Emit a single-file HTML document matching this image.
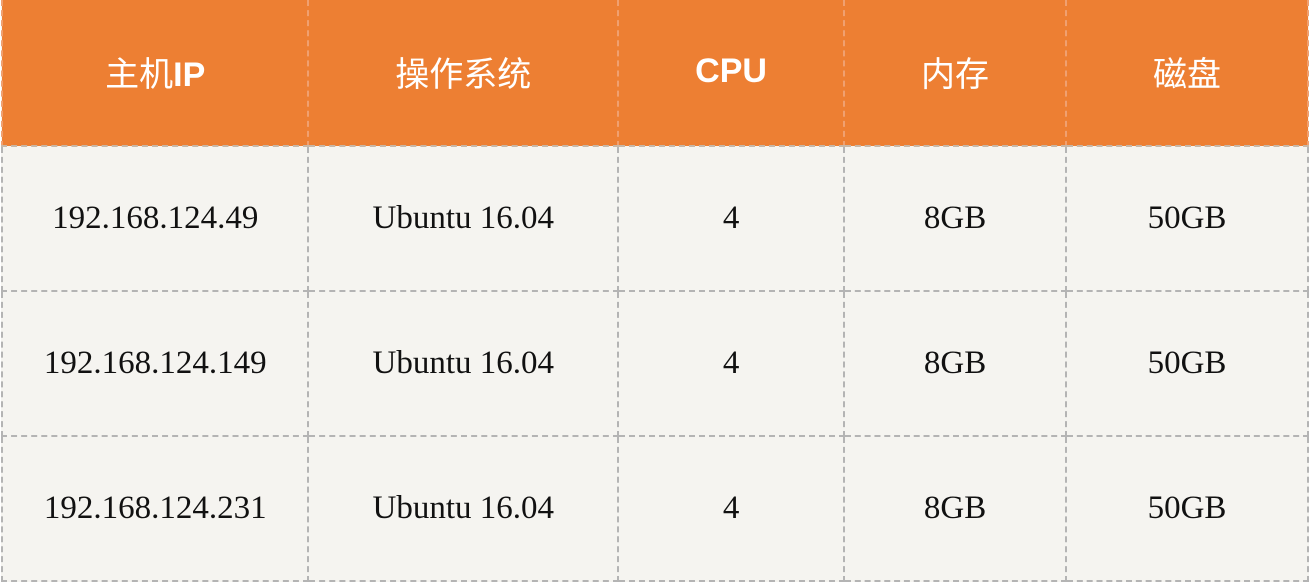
<html><head><style>
body{margin:0;width:1309px;height:585px;background:#fff;overflow:hidden}
table{position:absolute;left:1px;top:0;border-collapse:collapse;background:#f5f4f0}
td,th{border:2px dashed #b4b4b4;text-align:center;padding:0}
th{background:#ed7f33;color:#fff;height:146px;font:34px "Liberation Sans","Noto Sans CJK SC",sans-serif;border-color:#f0a070;border-bottom-color:#c8b8a8;vertical-align:middle;padding-bottom:3px}
th b{font-weight:bold}
td{height:145px;font:33px "Liberation Serif",serif;color:#111}
tr:first-child th{border-top:none}
</style></head><body>
<table>
<tr><th style="width:305px">主机<b>IP</b></th><th style="width:309px">操作系统</th><th style="width:225px"><b>CPU</b></th><th style="width:221px">内存</th><th style="width:241px">磁盘</th></tr>
<tr><td>192.168.124.49</td><td>Ubuntu 16.04</td><td>4</td><td>8GB</td><td>50GB</td></tr>
<tr><td>192.168.124.149</td><td>Ubuntu 16.04</td><td>4</td><td>8GB</td><td>50GB</td></tr>
<tr><td>192.168.124.231</td><td>Ubuntu 16.04</td><td>4</td><td>8GB</td><td>50GB</td></tr>
</table>
</body></html>
